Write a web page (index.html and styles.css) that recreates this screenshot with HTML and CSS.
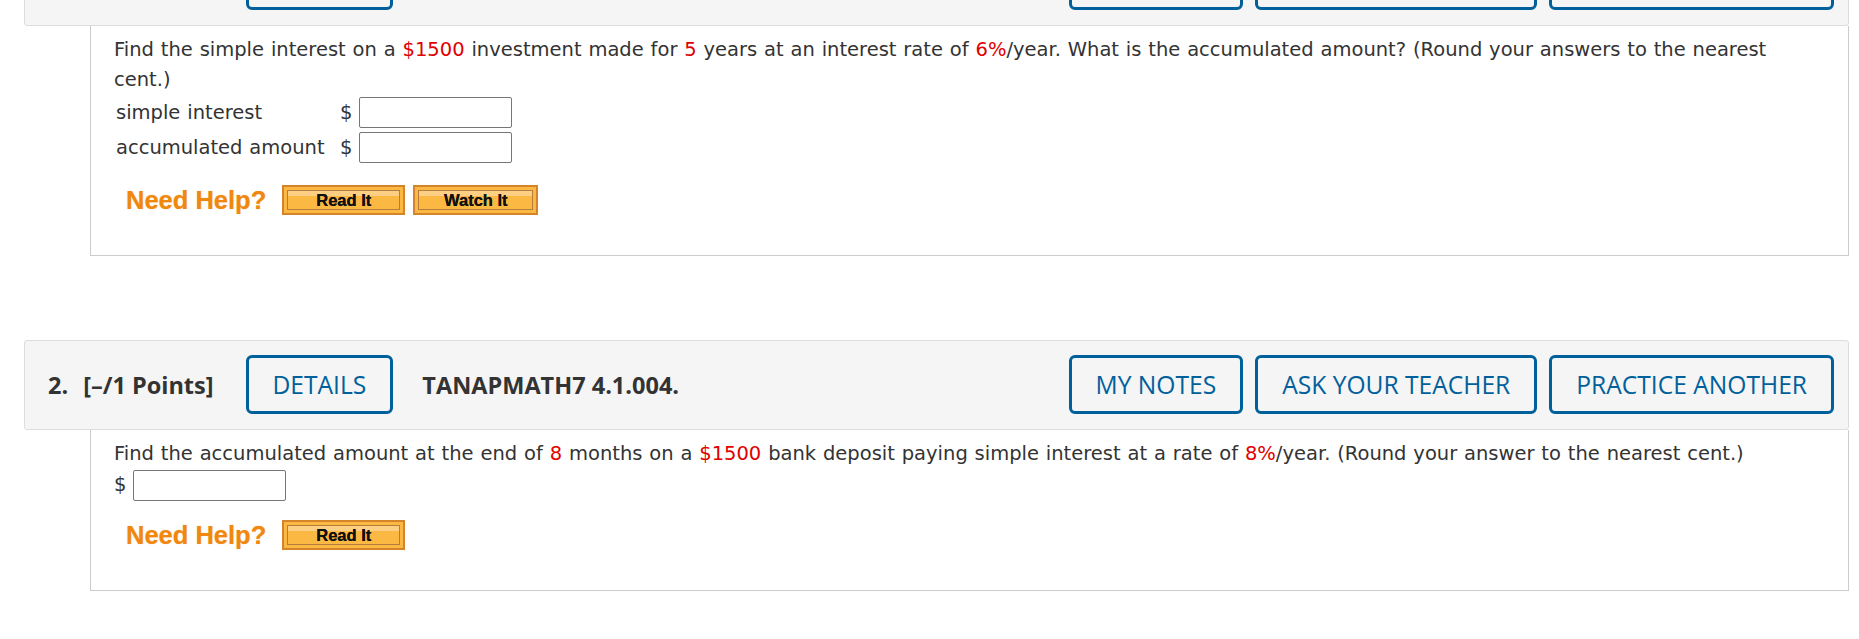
FILE: index.html
```html
<!DOCTYPE html>
<html>
<head>
<meta charset="utf-8">
<link rel="stylesheet" href="styles.css">
</head>
<body>
<div class="page">
  <div class="question first">
    <div class="q-header">
      <span class="q-num">1.</span>
      <span class="q-points">[–/1 Points]</span>
      <span class="q-btn details">DETAILS</span>
      <span class="q-title">TANAPMATH7 4.1.002.</span>
      <span class="spacer"></span>
      <span class="q-btn">MY NOTES</span>
      <span class="q-btn">ASK YOUR TEACHER</span>
      <span class="q-btn">PRACTICE ANOTHER</span>
    </div>
    <div class="q-body">
      <p class="q-text">Find the simple interest on a <span class="red">$1500</span> investment made for <span class="red">5</span> years at an interest rate of <span class="red">6%</span>/year. What is the accumulated amount? (Round your answers to the nearest cent.)</p>
      <div class="answer-grid">
        <span class="lbl">simple interest</span>
        <span class="dollar">$</span>
        <span class="inp"></span>
        <span class="lbl">accumulated amount</span>
        <span class="dollar">$</span>
        <span class="inp"></span>
      </div>
      <div class="help">
        <span class="help-label">Need Help?</span>
        <span class="help-btn read">Read It</span>
        <span class="help-btn watch">Watch It</span>
      </div>
    </div>
  </div>

  <div class="question second">
    <div class="q-header">
      <span class="q-num">2.</span>
      <span class="q-points">[–/1 Points]</span>
      <span class="q-btn details">DETAILS</span>
      <span class="q-title">TANAPMATH7 4.1.004.</span>
      <span class="spacer"></span>
      <span class="q-btn">MY NOTES</span>
      <span class="q-btn">ASK YOUR TEACHER</span>
      <span class="q-btn">PRACTICE ANOTHER</span>
    </div>
    <div class="q-body">
      <p class="q-text">Find the accumulated amount at the end of <span class="red">8</span> months on a <span class="red">$1500</span> bank deposit paying simple interest at a rate of <span class="red">8%</span>/year. (Round your answer to the nearest cent.)</p>
      <div class="answer-row">
        <span class="dollar-inline">$</span>
        <span class="inp"></span>
      </div>
      <div class="help help-2">
        <span class="help-label">Need Help?</span>
        <span class="help-btn read">Read It</span>
      </div>
    </div>
  </div>
</div>
</body>
</html>
```

FILE: styles.css
```css
html, body {
  margin: 0;
  padding: 0;
  background: #ffffff;
}

.page {
  margin-left: 24px;
  width: 1825px;
}

.question.first {
  margin-top: -64px;
}

.question.second {
  margin-top: 84px;
}

.q-header {
  display: flex;
  align-items: center;
  background: #f5f5f5;
  border: 1px solid #dcdcdc;
  border-radius: 3px;
  padding: 14px 14px 15px 23px;
  font-family: "Open Sans", "Liberation Sans", sans-serif;
  font-size: 24px;
  color: #333333;
}

.q-num {
  font-weight: 700;
  font-size: 23.5px;
}

.q-points {
  font-weight: 700;
  font-size: 23.5px;
  margin-left: 15px;
}

.q-btn {
  display: inline-block;
  border: 3px solid #00609b;
  border-radius: 6px;
  padding: 10px 24px;
  line-height: 33px;
  font-size: 24.6px;
  color: #00609b;
  font-weight: 400;
  white-space: nowrap;
}

.q-btn + .q-btn {
  margin-left: 12px;
}

.details {
  margin-left: 32px;
}

.q-title {
  font-weight: 700;
  font-size: 23.5px;
  margin-left: 29px;
}

.spacer {
  flex: 1;
}

.q-body {
  margin-left: 66px;
  border: 1px solid #cccccc;
  border-top: none;
  padding: 9px 23px 40px 23px;
  font-family: "DejaVu Sans", Verdana, sans-serif;
  font-size: 19.5px;
  word-spacing: 0.66px;
  line-height: 30px;
  color: #333333;
}

.q-text {
  margin: 0;
  padding-right: 40px;
}

.red {
  color: #e00000;
}

.answer-grid {
  display: grid;
  grid-template-columns: 224px 21px 153px;
  grid-auto-rows: 35px;
  align-items: center;
}

.lbl {
  padding-left: 2px;
}

.dollar {
  padding-left: 2px;
}

.inp {
  display: block;
  box-sizing: border-box;
  width: 153px;
  height: 31px;
  border: 1px solid #767676;
  border-radius: 2px;
  background: #ffffff;
}

.answer-row {
  display: flex;
  align-items: center;
  height: 32px;
}

.dollar-inline {
  width: 19px;
}

.help {
  display: flex;
  align-items: center;
  margin-top: 20px;
  padding-left: 12px;
  height: 30px;
}

.help-2 {
  margin-top: 19px;
}

.help-label {
  font-family: "Liberation Sans", Arial, sans-serif;
  font-weight: 700;
  font-size: 25.5px;
  color: #f0880f;
  word-spacing: 0;
  margin-right: 16px;
  text-shadow: 0 0 1px rgba(240, 136, 15, 0.5);
}

.help-btn {
  display: flex;
  align-items: center;
  justify-content: center;
  box-sizing: border-box;
  height: 30px;
  border: 2px solid #d5842a;
  background: #fbb843;
  box-shadow: inset 0 0 0 3px #fbb843, inset 0 0 0 4px #b47e3e, inset 0 6px 0 3px #fccf85;
  font-family: "Liberation Sans", Arial, sans-serif;
  font-weight: 700;
  font-size: 16.5px;
  word-spacing: 0;
  color: #111111;
  line-height: 1;
  padding-top: 1px;
  text-shadow: 0 0 0.5px #111111;
}

.help-btn.read {
  width: 123px;
}

.help-btn.watch {
  width: 125px;
  margin-left: 8px;
}
```
